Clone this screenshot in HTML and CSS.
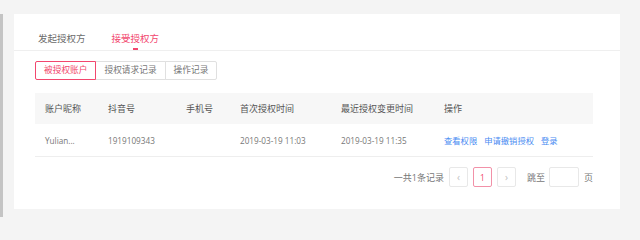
FILE: index.html
```html
<!DOCTYPE html>
<html lang="zh-CN">
<head>
<meta charset="utf-8">
<title>授权管理</title>
<link rel="stylesheet" href="styles.css">
</head>
<body>
<div class="strip"></div>
<main class="main">
  <section class="card">
    <nav class="tabs">
      <div class="tab"><span class="tab-label">发起授权方</span><i class="tab-bar"></i></div>
      <div class="tab active"><span class="tab-label">接受授权方</span><i class="tab-bar"></i></div>
    </nav>
    <div class="btn-group">
      <button class="seg active">被授权账户</button>
      <button class="seg">授权请求记录</button>
      <button class="seg">操作记录</button>
    </div>
    <div class="table">
      <div class="row head">
        <div class="cell">账户昵称</div>
        <div class="cell">抖音号</div>
        <div class="cell">手机号</div>
        <div class="cell">首次授权时间</div>
        <div class="cell">最近授权变更时间</div>
        <div class="cell">操作</div>
      </div>
      <div class="row body">
        <div class="cell num">Yulian...</div>
        <div class="cell num">1919109343</div>
        <div class="cell"></div>
        <div class="cell num">2019-03-19 11:03</div>
        <div class="cell num">2019-03-19 11:35</div>
        <div class="cell links"><a>查看权限</a><a>申请撤销授权</a><a>登录</a></div>
      </div>
    </div>
    <div class="pager">
      <span class="total">一共1条记录</span>
      <span class="pbtn arrow">&lsaquo;</span>
      <span class="pbtn current">1</span>
      <span class="pbtn arrow">&rsaquo;</span>
      <span class="jump">跳至</span>
      <span class="pinput"></span>
      <span class="unit">页</span>
    </div>
  </section>
</main>
</body>
</html>
```
FILE: styles.css
```css
html, body {
  margin: 0;
  padding: 0;
  height: 217px;
  overflow: hidden;
}
body {
  display: flex;
  background: #f4f4f4;
  font-family: "Open Sans", "Noto Sans CJK SC", sans-serif;
  color: #777;
  font-size: 9px;
}
.strip {
  flex: 0 0 3px;
  margin-top: 14px;
  background: #c4c4c4;
}
.main {
  flex: 0 0 auto;
  padding: 14px 20px 0 11px;
}
.card {
  width: 606px;
  background: #fff;
  padding: 0 27px 22px 21px;
  box-sizing: border-box;
}
.tabs {
  display: flex;
  align-items: flex-end;
  height: 36px;
  border-bottom: 1px solid #efefef;
  margin: 0 -27px 0 -21px;
  padding-left: 24px;
  gap: 26px;
}
.tab {
  display: flex;
  flex-direction: column;
  align-items: center;
  font-size: 9.5px;
  color: #6b6b6b;
}
.tab-label {
  line-height: 14px;
}
.tab-bar {
  display: block;
  width: 5px;
  height: 2px;
  margin-top: 2px;
  background: transparent;
}
.tab.active {
  color: #f2476e;
}
.tab.active .tab-bar {
  background: #f2476e;
}
.btn-group {
  display: flex;
  margin-top: 10px;
  height: 19px;
}
.seg {
  font: inherit;
  font-size: 8.7px;
  color: #777;
  background: #fff;
  border: 1px solid #e0e0e0;
  padding: 0 8px;
  height: 19px;
  line-height: 17px;
  margin: 0;
  margin-left: -1px;
}
.seg:first-child {
  margin-left: 0;
  border-radius: 2px 0 0 2px;
}
.seg:last-child {
  border-radius: 0 2px 2px 0;
}
.seg.active {
  color: #f2476e;
  border-color: #f2476e;
  position: relative;
  z-index: 1;
}
.table {
  margin-top: 13px;
}
.row {
  display: grid;
  grid-template-columns: 63px 78px 54px 101px 103px 1fr;
  align-items: center;
}
.row.head {
  height: 31px;
  background: #f7f7f7;
  color: #555;
}
.row.body {
  height: 32px;
  border-bottom: 1px solid #eeeeee;
  color: #777;
}
.cell {
  padding-left: 10px;
  white-space: nowrap;
}
.num {
  font-size: 8.2px;
}
.links {
  display: flex;
  gap: 7px;
  font-size: 8.3px;
}
.links a {
  color: #4a8cf2;
}
.pager {
  display: flex;
  align-items: center;
  justify-content: flex-end;
  margin-top: 10px;
  height: 20px;
}
.total {
  margin-right: 5px;
}
.pbtn {
  display: flex;
  align-items: center;
  justify-content: center;
  width: 17px;
  height: 18px;
  border: 1px solid #e8e8e8;
  border-radius: 2px;
  margin-right: 5px;
  color: #c0c0c0;
  font-size: 10px;
}
.pbtn.current {
  border-color: #f291a8;
  color: #f2476e;
  font-size: 8.5px;
}
.jump {
  margin-left: 6px;
  margin-right: 4px;
}
.pinput {
  width: 28px;
  height: 18px;
  border: 1px solid #e8e8e8;
  border-radius: 2px;
  margin-right: 5px;
}
.unit {
  color: #777;
}
```
